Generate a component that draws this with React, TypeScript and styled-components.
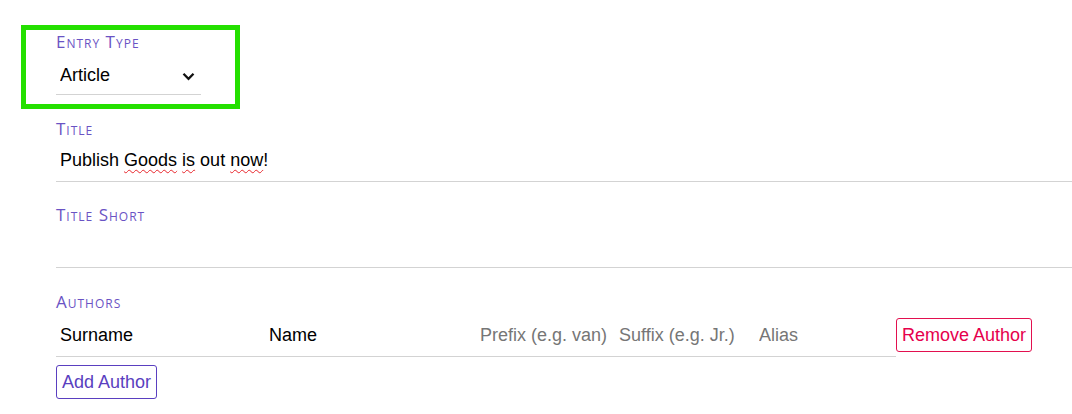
import React from "react";
import styled, { createGlobalStyle } from "styled-components";

const GlobalStyle = createGlobalStyle`
  body {
    margin: 0;
    background: #fff;
    font-family: "Liberation Sans", Arial, sans-serif;
  }
`;

const Form = styled.form`
  display: flex;
  flex-direction: column;
  align-items: stretch;
  padding: 25px 0 0 56px;
`;

const Highlight = styled.div`
  box-sizing: border-box;
  width: 219px;
  height: 84px;
  margin-left: -35px;
  padding: 2px 0 0 30px;
  border: 5px solid #24e000;
`;

const Field = styled.div<{ $gap?: number }>`
  display: flex;
  flex-direction: column;
  margin-top: ${(p) => p.$gap ?? 23}px;
`;

const Label = styled.label`
  display: block;
  height: 20px;
  font-family: "Open Sans", Lato, sans-serif;
  font-size: 17px;
  line-height: 20px;
  letter-spacing: 1px;
  font-variant: small-caps;
  color: #6a53c4;
`;

const SelectWrap = styled.div`
  position: relative;
  width: 145px;
`;

const Select = styled.select`
  appearance: none;
  box-sizing: border-box;
  width: 100%;
  height: 43px;
  margin: 0;
  padding: 3px 0 0 4px;
  border: 0;
  border-bottom: 1px solid #d3d3d3;
  border-radius: 0;
  background: transparent;
  font-family: "Liberation Sans", Arial, sans-serif;
  font-size: 18px;
  color: #000;
  outline: none;
`;

const Chevron = styled.svg`
  position: absolute;
  right: 6px;
  top: 20px;
  pointer-events: none;
`;

const Input = styled.input<{ $row?: boolean }>`
  box-sizing: border-box;
  width: 100%;
  min-width: 0;
  height: ${(p) => (p.$row ? 45 : 43)}px;
  margin: 0;
  padding: ${(p) => (p.$row ? "2px" : "0")} 0 0 4px;
  border: 0;
  border-bottom: 1px solid #d3d3d3;
  border-radius: 0;
  background: transparent;
  font-family: "Liberation Sans", Arial, sans-serif;
  font-size: 18px;
  color: #000;
  outline: none;

  &::placeholder {
    color: #767676;
  }
`;

const TextBox = styled.div`
  box-sizing: border-box;
  height: 43px;
  padding: 0 0 0 4px;
  border-bottom: 1px solid #d3d3d3;
  font-size: 18px;
  line-height: 42px;
  color: #000;
  white-space: nowrap;
  outline: none;
`;

const Typo = styled.span`
  text-decoration: underline wavy #e8262c;
  text-decoration-thickness: 1px;
  text-underline-offset: 3px;
  text-decoration-skip-ink: none;
`;

const AuthorRow = styled.div`
  display: grid;
  grid-template-columns: 209px 211px 139px 140px 141px auto;
  align-items: center;
`;

const Button = styled.button<{ $danger?: boolean }>`
  justify-self: start;
  margin: 0;
  padding: 5px 5px;
  border: 1px solid ${(p) => (p.$danger ? "#e2104f" : "#5a3fc0")};
  border-radius: 3px;
  background: #fff;
  font-family: "Liberation Sans", Arial, sans-serif;
  font-size: 18px;
  line-height: 22px;
  color: ${(p) => (p.$danger ? "#e6004c" : "#5a3fc0")};
  cursor: pointer;
`;

const AddButton = styled(Button)`
  align-self: flex-start;
  margin-top: 8px;
`;

export default function App() {
  return (
    <>
      <GlobalStyle />
      <Form onSubmit={(e) => e.preventDefault()}>
        <Highlight>
          <Label htmlFor="entry-type">Entry Type</Label>
          <SelectWrap>
            <Select id="entry-type" defaultValue="article">
              <option value="article">Article</option>
              <option value="book">Book</option>
              <option value="misc">Misc</option>
            </Select>
            <Chevron width="13" height="9" viewBox="0 0 13 9">
              <path d="M1.5 1.8l5 5 5-5" fill="none" stroke="#111" strokeWidth="2.3" />
            </Chevron>
          </SelectWrap>
        </Highlight>

        <Field $gap={10}>
          <Label>Title</Label>
          <TextBox contentEditable suppressContentEditableWarning>
            Publish <Typo>Goods</Typo> <Typo>is</Typo> out <Typo>now</Typo>!
          </TextBox>
        </Field>

        <Field>
          <Label htmlFor="title-short">Title Short</Label>
          <Input id="title-short" />
        </Field>

        <Field $gap={24}>
          <Label>Authors</Label>
          <AuthorRow>
            <Input $row defaultValue="Surname" />
            <Input $row defaultValue="Name" />
            <Input $row placeholder="Prefix (e.g. van)" />
            <Input $row placeholder="Suffix (e.g. Jr.)" />
            <Input $row placeholder="Alias" />
            <Button type="button" $danger>
              Remove Author
            </Button>
          </AuthorRow>
          <AddButton type="button">Add Author</AddButton>
        </Field>
      </Form>
    </>
  );
}
